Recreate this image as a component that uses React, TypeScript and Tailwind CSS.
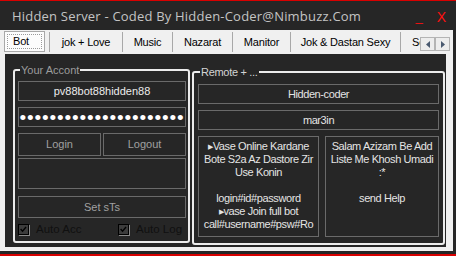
const ui = "font-['Liberation_Sans',Arial,sans-serif]";

const tabs = [
  { label: 'jok + Love', w: 'w-[73px]' },
  { label: 'Music', w: 'w-[50px]' },
  { label: 'Nazarat', w: 'w-[60px]' },
  { label: 'Manitor', w: 'w-[58px]' },
  { label: 'Jok & Dastan Sexy', w: 'w-[110px]' },
];

const CheckBox = ({ label }: { label: string }) => (
  <div className="flex items-center">
    <div className="w-[11px] h-[11px] border border-black bg-[#3c3c3c] shadow-[1px_1px_0_#8a8a8a]">
      <svg viewBox="0 0 11 11" className="w-full h-full">
        <path d="M2 5 L4.3 7.5 L8.6 2.4" fill="none" stroke="#000" strokeWidth="1.7" />
      </svg>
    </div>
    <span className="ml-[7px] text-[11.5px] leading-none text-[#101010]">{label}</span>
  </div>
);

const ArrowBtn = ({ dir }: { dir: 'l' | 'r' }) => (
  <div className="w-[15px] h-[14px] bg-[#ededed] border border-[#b4b4b4] flex items-center justify-center">
    <svg viewBox="0 0 4 7" className="w-[4px] h-[7px]">
      <path d={dir === 'l' ? 'M4 0 L0 3.5 L4 7 Z' : 'M0 0 L4 3.5 L0 7 Z'} fill="#4a5a70" />
    </svg>
  </div>
);

export default function App() {
  return (
    <div className={`${ui} w-[456px] h-[256px] bg-[#262626] flex flex-col overflow-hidden`}>
      <div className="h-px bg-[#d80000]" />

      {/* title bar */}
      <div className="h-[29px] flex items-center pl-[12px] pr-[10px] pt-[3px]">
        <span className="font-['Open_Sans',sans-serif] text-[13px] tracking-[0.2px] text-[#c4c4c4] whitespace-nowrap">
          Hidden Server - Coded By Hidden-Coder@Nimbuzz.Com
        </span>
        <div className="ml-auto flex items-center gap-[14px] text-[#ff1010]">
          <span className="text-[13px] leading-none -mt-[2px]">_</span>
          <span className="text-[14px] leading-none">X</span>
        </div>
      </div>

      {/* tab control */}
      <div className="flex-1 flex flex-col pr-[3px]">
        <div className="relative h-[24px] bg-[#f0f0f0] flex items-start pt-[1px] text-[11px] text-black tracking-[-0.2px] overflow-hidden">
          <div className="ml-[4px] w-[41px] h-[21px] bg-[#fcfcfc] border border-[#a8a8a8] p-[2px]">
            <div className="h-full border border-dotted border-[#9a9a9a] pl-[5px] flex items-center">Bot</div>
          </div>
          <div className="w-[4px]" />
          <div className="mt-[1px] h-[20px] border-l border-[#a8a8a8]" />
          {tabs.map((t) => (
            <div
              key={t.label}
              className={`${t.w} mt-[1px] h-[20px] border-r border-[#a8a8a8] flex items-center justify-center whitespace-nowrap`}
            >
              {t.label}
            </div>
          ))}
          <div className="mt-[1px] h-[20px] pl-[11px] flex items-center whitespace-nowrap">Setting</div>
          <div className="absolute left-[420px] top-[7px] flex">
            <ArrowBtn dir="l" />
            <ArrowBtn dir="r" />
          </div>
        </div>

        <div className="flex-1 bg-[#f0f0f0] flex flex-col">
          <div className="flex-1 ml-[5px] mr-[7px] mb-[4px] bg-[#262626] flex items-start pl-[8px] gap-[2px]">
            {/* Your Accont */}
            <fieldset className="mt-[9px] w-[177px] h-[180px] border-2 border-[#ececec] rounded-[3px]">
              <legend className="ml-[5px] px-[1px] text-[11px] leading-[14px] text-[#9c9c9c]">Your Accont</legend>
              <div className="mt-[4px] pl-[3px] pr-[2px] flex flex-col text-[11px]">
                <div className="h-[20px] border border-[#6a6a6a] flex items-center justify-center text-[#ececec]">
                  pv88bot88hidden88
                </div>
                <div className="mt-[6px] h-[20px] border border-[#6a6a6a] flex items-center justify-center text-white text-[19px] leading-none tracking-[0.85px] overflow-hidden">
                  ••••••••••••••••••••••
                </div>
                <div className="mt-[6px] flex gap-[2px]">
                  <div className="w-[83px] h-[23px] border border-[#6a6a6a] flex items-center justify-center text-[#a0a0a0]">Login</div>
                  <div className="w-[83px] h-[23px] border border-[#6a6a6a] flex items-center justify-center text-[#a0a0a0]">Logout</div>
                </div>
                <div className="mt-[2px] h-[31px] border border-[#6a6a6a]" />
                <div className="mt-[7px] h-[22px] border border-[#6a6a6a] flex items-center justify-center text-[#a0a0a0]">Set sTs</div>
                <div className="mt-[6px] flex">
                  <div className="w-[100px]">
                    <CheckBox label="Auto Acc" />
                  </div>
                  <CheckBox label="Auto Log" />
                </div>
              </div>
            </fieldset>

            {/* Remote */}
            <fieldset className="mt-[11px] w-[253px] h-[180px] border-2 border-[#ececec] rounded-[3px]">
              <legend className="ml-[6px] px-[1px] text-[11px] leading-[14px] text-[#d4d4d4] tracking-[-0.3px]">Remote + ...</legend>
              <div className="mt-[5px] pl-[4px] pr-[4px] flex flex-col text-[11px] text-[#e4e4e4] tracking-[-0.4px]">
                <div className="h-[20px] border border-[#6a6a6a] flex items-center justify-center">Hidden-coder</div>
                <div className="mt-[6px] h-[20px] border border-[#6a6a6a] flex items-center justify-center">mar3in</div>
                <div className="mt-[6px] flex gap-[6px] leading-[13px] text-center">
                  <div className="w-[121px] h-[101px] border border-[#6a6a6a] pt-[3px] whitespace-nowrap overflow-hidden">
                    <div><span className="text-[7px] align-[1px]">▶</span>Vase Online Kardane</div>
                    <div>Bote S2a Az Dastore Zir</div>
                    <div>Use Konin</div>
                    <div>&nbsp;</div>
                    <div>login#id#password</div>
                    <div><span className="text-[7px] align-[1px]">▶</span>vase Join full bot</div>
                    <div>call#username#psw#Ro</div>
                  </div>
                  <div className="w-[114px] h-[101px] border border-[#6a6a6a] pt-[3px] whitespace-nowrap overflow-hidden">
                    <div>Salam Azizam Be Add</div>
                    <div>Liste Me Khosh Umadi</div>
                    <div>:*</div>
                    <div>&nbsp;</div>
                    <div>send Help</div>
                  </div>
                </div>
              </div>
            </fieldset>
          </div>
        </div>
      </div>

      <div className="h-[3px]" />
      <div className="h-[2px] bg-[#d80000]" />
    </div>
  );
}
